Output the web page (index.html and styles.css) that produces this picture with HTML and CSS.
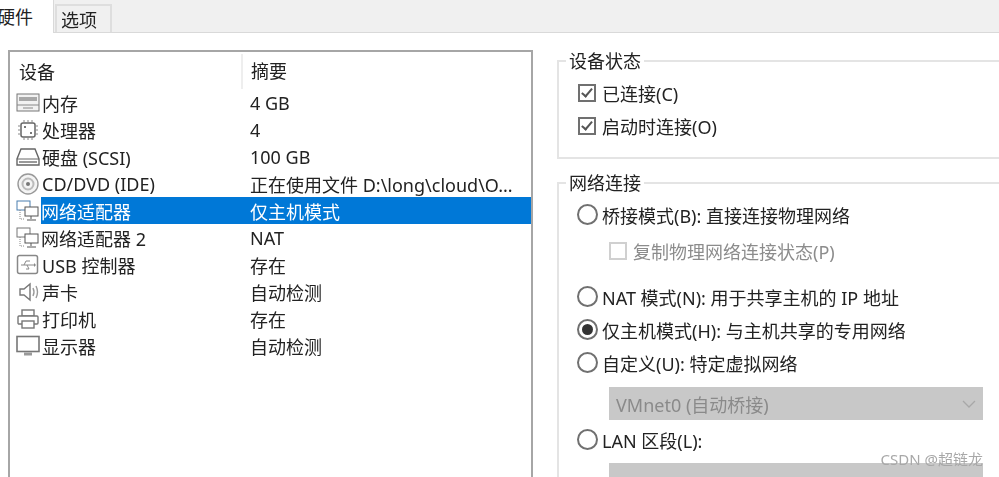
FILE: index.html
```html
<!DOCTYPE html>
<html lang="zh-CN">
<head>
    <meta charset="UTF-8">
    <title>虚拟机设置</title>
    <link rel="stylesheet" href="styles.css">
</head>
<body>
    <div class="window">
        <div class="tabs">
            <div class="tab active">硬件</div>
            <div class="tab">选项</div>
        </div>
        <div class="content">
            <section class="device-list">
                <div class="list-head">
                    <div class="col-name">设备</div>
                    <div class="col-summary">摘要</div>
                </div>
                <div class="row">
                    <div class="col-name">
                        <svg class="icon" viewBox="0 0 24 22"><rect x="1" y="2" width="22" height="17" fill="#f2f2f2" stroke="#777"/><rect x="3" y="5" width="18" height="4" fill="#a8a8a8"/><path d="M1 13h22M7 16h10" stroke="#888" fill="none"/></svg>
                        <span>内存</span>
                    </div>
                    <div class="col-summary">4 GB</div>
                </div>
                <div class="row">
                    <div class="col-name">
                        <svg class="icon" viewBox="0 0 24 22"><rect x="5" y="4" width="14" height="14" rx="2" fill="#fff" stroke="#666" stroke-width="1.5"/><path d="M8 1v3M12 1v3M16 1v3M8 18v3M12 18v3M16 18v3M2 7h3M2 11h3M2 15h3M19 7h3M19 11h3M19 15h3" stroke="#888"/><rect x="8" y="7" width="2" height="2" fill="#777"/><rect x="14" y="13" width="2" height="2" fill="#777"/></svg>
                        <span>处理器</span>
                    </div>
                    <div class="col-summary">4</div>
                </div>
                <div class="row">
                    <div class="col-name">
                        <svg class="icon" viewBox="0 0 24 22"><path d="M5 3h14l4 10v6H1v-6z" fill="#fff" stroke="#666" stroke-width="1.4"/><path d="M1 13h22" stroke="#666"/><path d="M3 16h18" stroke="#999" stroke-width="2"/></svg>
                        <span>硬盘 (SCSI)</span>
                    </div>
                    <div class="col-summary">100 GB</div>
                </div>
                <div class="row">
                    <div class="col-name">
                        <svg class="icon" viewBox="0 0 24 22"><circle cx="12" cy="11" r="10" fill="#f4f4f4" stroke="#999" stroke-width="1.4"/><circle cx="12" cy="11" r="5.5" fill="none" stroke="#bbb" stroke-width="2"/><circle cx="12" cy="11" r="2" fill="#777"/></svg>
                        <span>CD/DVD (IDE)</span>
                    </div>
                    <div class="col-summary">正在使用文件 D:\long\cloud\O...</div>
                </div>
                <div class="row selected">
                    <div class="col-name">
                        <svg class="icon" viewBox="0 0 24 22"><rect x="1" y="1" width="13" height="9" fill="#fff" stroke="#4a7fb0"/><rect x="9" y="7" width="13" height="9" fill="#fff" stroke="#555"/><path d="M15 16v3M11 20h9" stroke="#555"/><path d="M4 10v9h5" stroke="#888" stroke-dasharray="1 1" fill="none"/></svg>
                        <span class="name-text">网络适配器</span>
                    </div>
                    <div class="col-summary">仅主机模式</div>
                </div>
                <div class="row">
                    <div class="col-name">
                        <svg class="icon" viewBox="0 0 24 22"><rect x="1" y="1" width="13" height="9" fill="#fff" stroke="#777"/><rect x="9" y="7" width="13" height="9" fill="#fff" stroke="#555"/><path d="M15 16v3M11 20h9" stroke="#555"/><path d="M4 10v9h5" stroke="#888" stroke-dasharray="1 1" fill="none"/></svg>
                        <span class="name-text">网络适配器 2</span>
                    </div>
                    <div class="col-summary">NAT</div>
                </div>
                <div class="row">
                    <div class="col-name">
                        <svg class="icon" viewBox="0 0 24 22"><rect x="1.5" y="1.5" width="20" height="18" rx="2" fill="#fff" stroke="#888" stroke-width="1.5"/><path d="M5 11h13M14 7h-4l-2 4M10 15h3l-2-4" stroke="#888" fill="none"/><path d="M18 9v4l2-2z" fill="#888"/></svg>
                        <span>USB 控制器</span>
                    </div>
                    <div class="col-summary">存在</div>
                </div>
                <div class="row">
                    <div class="col-name">
                        <svg class="icon" viewBox="0 0 24 22"><path d="M4 8h4l6-5v16l-6-5H4z" fill="#fff" stroke="#777" stroke-width="1.4"/><path d="M17 7q2 4 0 8M20 5q3 6 0 12" stroke="#999" stroke-width="1.4" fill="none"/></svg>
                        <span>声卡</span>
                    </div>
                    <div class="col-summary">自动检测</div>
                </div>
                <div class="row">
                    <div class="col-name">
                        <svg class="icon" viewBox="0 0 24 22"><rect x="6" y="2" width="12" height="6" fill="#fff" stroke="#777" stroke-width="1.4"/><rect x="2" y="8" width="20" height="8" rx="1" fill="#fff" stroke="#777" stroke-width="1.4"/><rect x="6" y="13" width="12" height="7" fill="#fff" stroke="#777" stroke-width="1.4"/></svg>
                        <span>打印机</span>
                    </div>
                    <div class="col-summary">存在</div>
                </div>
                <div class="row">
                    <div class="col-name">
                        <svg class="icon" viewBox="0 0 24 22"><rect x="1" y="1.5" width="22" height="15" fill="#fff" stroke="#777" stroke-width="1.6"/><path d="M8 19h8" stroke="#999" stroke-width="3"/></svg>
                        <span>显示器</span>
                    </div>
                    <div class="col-summary">自动检测</div>
                </div>
            </section>

            <div class="side">
                <fieldset class="group group-status">
                    <legend>设备状态</legend>
                    <div class="option"><span class="check on"></span>已连接(C)</div>
                    <div class="option"><span class="check on"></span>启动时连接(O)</div>
                </fieldset>

                <fieldset class="group group-network">
                    <legend>网络连接</legend>
                    <div class="option"><span class="radio"></span>桥接模式(B): 直接连接物理网络</div>
                    <div class="option sub disabled"><span class="check"></span>复制物理网络连接状态(P)</div>
                    <div class="option gap-top"><span class="radio"></span>NAT 模式(N): 用于共享主机的 IP 地址</div>
                    <div class="option"><span class="radio on"></span>仅主机模式(H): 与主机共享的专用网络</div>
                    <div class="option"><span class="radio"></span>自定义(U): 特定虚拟网络</div>
                    <div class="select">
                        <span>VMnet0 (自动桥接)</span>
                        <svg class="chevron" viewBox="0 0 14 8"><path d="M1 1l6 6 6-6" fill="none" stroke="#a8a8a8" stroke-width="1.3"/></svg>
                    </div>
                    <div class="option"><span class="radio"></span>LAN 区段(L):</div>
                    <div class="select empty"></div>
                </fieldset>
            </div>
        </div>
        <div class="watermark">CSDN @超链龙</div>
    </div>
</body>
</html>
```

FILE: styles.css
```css
html, body {
    margin: 0;
    padding: 0;
    background: #fff;
}

.window {
    position: relative;
    width: 999px;
    height: 477px;
    overflow: hidden;
    font-family: "Noto Sans", "Noto Sans CJK SC", sans-serif;
    font-size: 18px;
    color: #222;
    filter: blur(0.35px);
}

.tabs {
    display: flex;
    align-items: flex-end;
    height: 32px;
    background: #f0f0f0;
    border-bottom: 1px solid #d9d9d9;
}

.tab {
    width: 57px;
    height: 28px;
    margin-left: 1px;
    padding-left: 4px;
    line-height: 29px;
    background: #f0f0f0;
    border: 2px solid #dedede;
    border-bottom: none;
    box-sizing: border-box;
}

.tab.active {
    width: 54px;
    height: 33px;
    margin: 0 0 -1px 0;
    padding-left: 0;
    line-height: 34px;
    background: #fff;
    border: none;
    border-right: 1px solid #d9d9d9;
    text-indent: -3px;
    overflow: hidden;
}

.content {
    display: flex;
    padding: 17px 0 0 8px;
}

.device-list {
    width: 525px;
    height: 440px;
    box-sizing: border-box;
    padding-top: 1px;
    border: 2px solid #a6a6a6;
    border-bottom: none;
    flex-shrink: 0;
}

.list-head {
    display: flex;
    height: 36px;
    align-items: center;
}

.list-head .col-summary {
    border-left: 2px solid #eee;
    height: 35px;
    line-height: 35px;
    padding-left: 8px;
    flex: 1;
}

.list-head .col-name {
    padding-left: 9px;
}

.row {
    display: flex;
    align-items: center;
    height: 27px;
}

.col-name {
    display: flex;
    align-items: center;
    gap: 2px;
    width: 231px;
    box-sizing: border-box;
    padding-left: 6px;
    white-space: nowrap;
}

.col-summary {
    padding-left: 9px;
    white-space: nowrap;
}

.icon {
    width: 24px;
    height: 22px;
    flex-shrink: 0;
}

.name-text {
    margin-left: -1px;
}

.row.selected {
    background: linear-gradient(to right, transparent 31px, #0078d7 31px);
    color: #fff;
}

.side {
    margin-left: 24px;
    width: 480px;
    flex-shrink: 0;
}

.group {
    margin: 0;
    padding: 0 0 0 18px;
    border: 2px solid #e4e4e4;
    width: 480px;
    box-sizing: border-box;
}

.group legend {
    padding: 0 3px;
    margin-left: -11px;
    line-height: 22px;
}

.group-status {
    height: 109px;
    margin-top: 0;
}

.group-network {
    height: 320px;
    margin-top: 13px;
}

.option {
    display: flex;
    align-items: center;
    height: 33px;
    white-space: pre;
}

.group-status .option:first-of-type {
    margin-top: 4px;
}

.group-network .option:first-of-type {
    margin-top: 4px;
}

.option.sub {
    height: 39px;
    padding-left: 31px;
}

.option.gap-top {
    margin-top: 10px;
}

.disabled {
    color: #8c8c8c;
}

.check {
    width: 14px;
    height: 14px;
    margin: 0 6px 0 1px;
    flex-shrink: 0;
    position: relative;
    border: 2px solid #707070;
    background: #fff;
}

.check.on::after {
    content: "";
    position: absolute;
    left: 4px;
    top: 0;
    width: 4px;
    height: 9px;
    border: solid #555;
    border-width: 0 2px 2px 0;
    transform: rotate(40deg);
}

.disabled .check {
    border-color: #d0d0d0;
}

.radio {
    width: 17px;
    height: 17px;
    margin-right: 4px;
    flex-shrink: 0;
    position: relative;
    border: 2px solid #707070;
    border-radius: 50%;
    background: #fff;
}

.radio.on::after {
    content: "";
    position: absolute;
    left: 3px;
    top: 3px;
    width: 11px;
    height: 11px;
    border-radius: 50%;
    background: #333;
}

.select {
    display: flex;
    align-items: center;
    justify-content: space-between;
    width: 374px;
    height: 33px;
    margin: 8px 0 3px 32px;
    padding: 0 7px;
    box-sizing: border-box;
    background: #c8c8c8;
    color: #8a8a8a;
}

.select.empty {
    margin-top: 7px;
}

.chevron {
    width: 14px;
    height: 8px;
}

.watermark {
    position: absolute;
    right: 16px;
    bottom: 8px;
    font-size: 15px;
    color: #a8a8a8;
}
```
